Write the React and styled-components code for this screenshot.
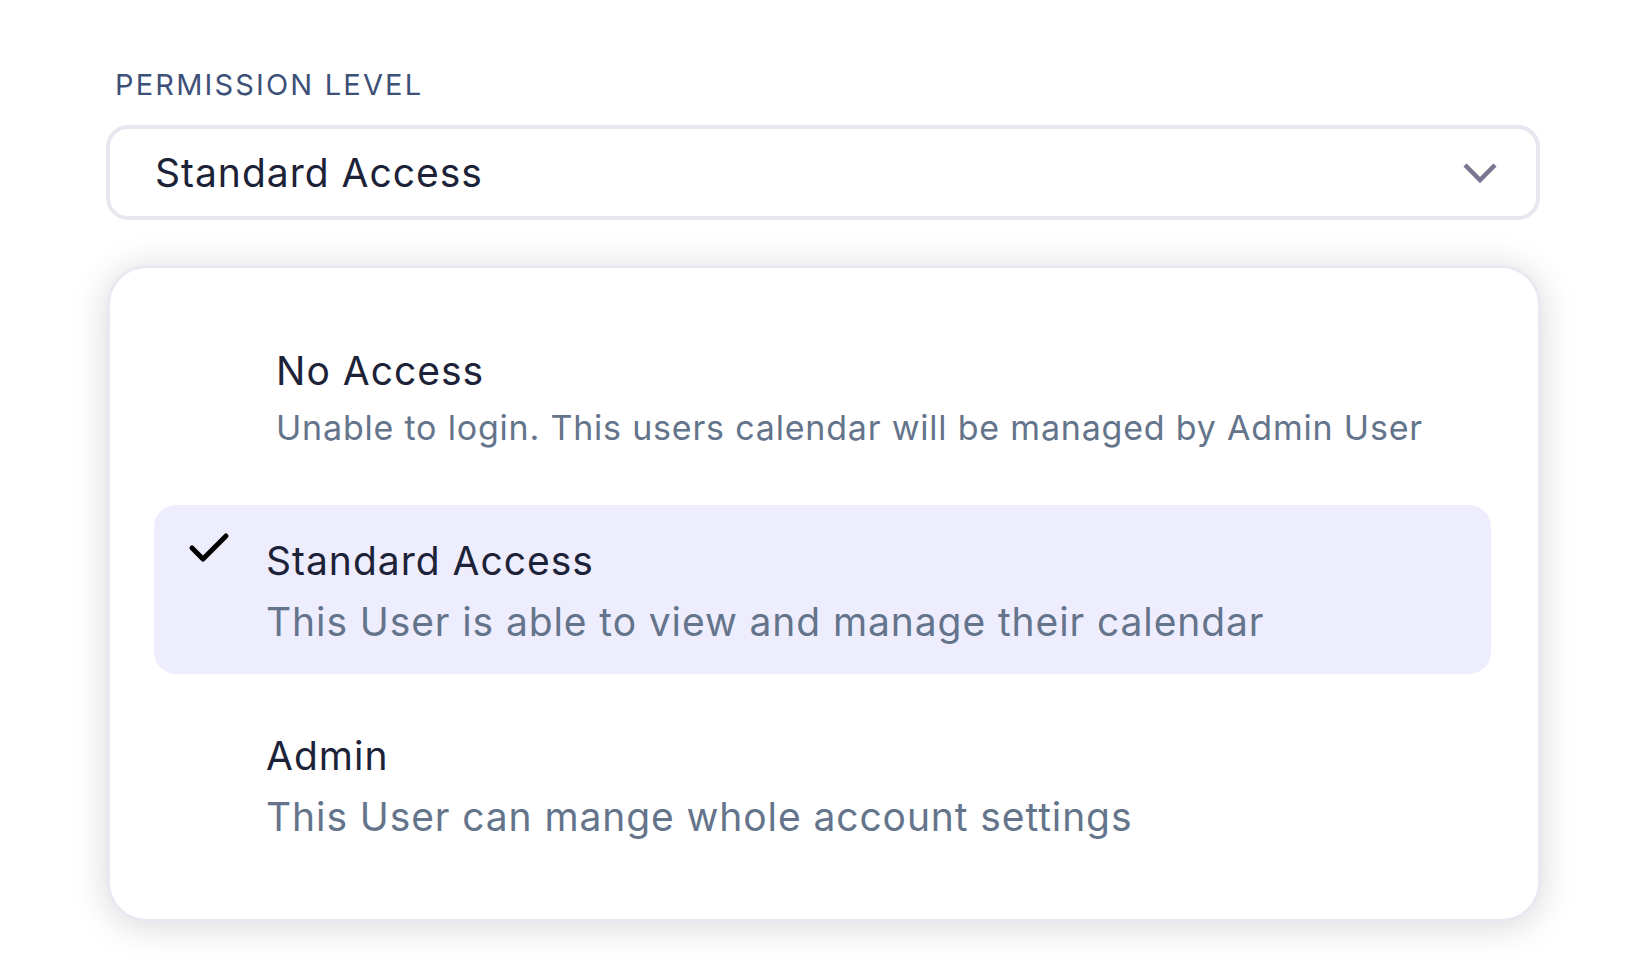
import React from 'react'
import styled, { createGlobalStyle } from 'styled-components'

const GlobalStyle = createGlobalStyle`
  html, body {
    margin: 0;
    padding: 0;
    background: #ffffff;
  }
  body {
    font-family: Inter, "Noto Sans", "Liberation Sans", sans-serif;
    -webkit-font-smoothing: antialiased;
  }
`

const Page = styled.div`
  width: 1640px;
  height: 965px;
  box-sizing: border-box;
  padding: 67px 100px 0 106px;
`

const Label = styled.div`
  font-size: 29px;
  line-height: 35px;
  letter-spacing: 0.075em;
  color: #3d5077;
  padding-left: 9px;
  margin-bottom: 23px;
`

const SelectBox = styled.div`
  box-sizing: border-box;
  width: 1434px;
  height: 95px;
  border: 4px solid #e7e7f0;
  border-radius: 22px;
  background: #fff;
  display: flex;
  align-items: center;
  justify-content: space-between;
  padding: 0 38px 0 45px;
`

const SelectValue = styled.span`
  font-size: 39px;
  letter-spacing: 1px;
  color: #1c2237;
`

const Panel = styled.div`
  box-sizing: border-box;
  width: 1434px;
  margin-top: 45px;
  margin-left: 1px;
  border: 3px solid #e9e9f2;
  border-radius: 40px;
  background: #fff;
  box-shadow: 0 4px 36px rgba(0, 0, 0, 0.16);
  padding: 47px 47px 50px 44px;
  display: flex;
  flex-direction: column;
  gap: 26px;
`

const Option = styled.div`
  display: flex;
  align-items: flex-start;
  border-radius: 22px;
  background: ${p => (p.$selected ? '#eeedfe' : 'transparent')};
  padding: 33px 0 ${p => (p.$compact ? '31px' : '30px')} 34px;
`

const CheckSlot = styled.div`
  flex: 0 0 ${p => p.$width}px;
  height: 40px;
  display: flex;
  align-items: flex-start;
  svg {
    margin-top: -7px;
  }
`

const Texts = styled.div`
  display: flex;
  flex-direction: column;
`

const Title = styled.div`
  font-size: 39px;
  line-height: 46px;
  letter-spacing: 1px;
  color: #1c2237;
`

const Desc = styled.div`
  font-size: ${p => (p.$small ? '34px' : '39px')};
  line-height: ${p => (p.$small ? '41px' : '45px')};
  letter-spacing: ${p => (p.$small ? '0.8px' : '0.9px')};
  margin-top: ${p => (p.$small ? '13px' : '15px')};
  color: #64748b;
`

const Chevron = () => (
  <svg width="36" height="22" viewBox="0 0 36 22">
    <polyline
      points="3,3 18,18 33,3"
      fill="none"
      stroke="#77778f"
      strokeWidth="4.5"
      strokeLinejoin="miter"
    />
  </svg>
)

const Check = () => (
  <svg width="42" height="32" viewBox="0 0 42 32">
    <polyline
      points="4,17 15,28 38,5"
      fill="none"
      stroke="#000"
      strokeWidth="5"
      strokeLinecap="round"
      strokeLinejoin="round"
    />
  </svg>
)

const options = [
  {
    title: 'No Access',
    desc: 'Unable to login. This users calendar will be managed by Admin User',
    compact: true,
  },
  {
    title: 'Standard Access',
    desc: 'This User is able to view and manage their calendar',
    selected: true,
  },
  {
    title: 'Admin',
    desc: 'This User can mange whole account settings',
  },
]

export default function App() {
  return (
    <Page>
      <GlobalStyle />
      <Label>PERMISSION LEVEL</Label>
      <SelectBox>
        <SelectValue>Standard Access</SelectValue>
        <Chevron />
      </SelectBox>
      <Panel>
        {options.map(o => (
          <Option key={o.title} $selected={o.selected} $compact={o.compact}>
            <CheckSlot $width={o.compact ? 88 : 78}>
              {o.selected && <Check />}
            </CheckSlot>
            <Texts>
              <Title>{o.title}</Title>
              <Desc $small={o.compact}>{o.desc}</Desc>
            </Texts>
          </Option>
        ))}
      </Panel>
    </Page>
  )
}
